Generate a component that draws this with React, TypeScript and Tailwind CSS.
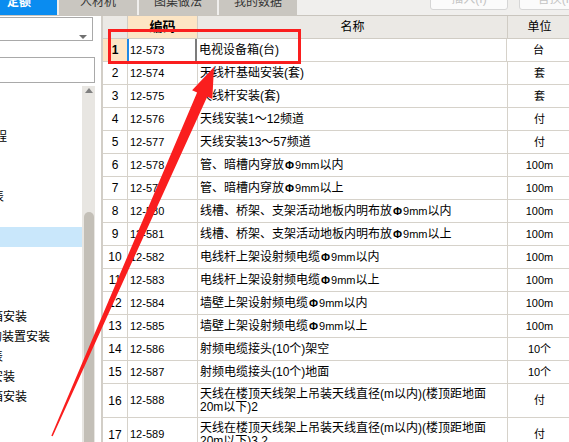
import React from "react";

type Row = { no: number; code: string; name: string[]; unit: string; tall?: boolean };

const rows: Row[] = [
  { no: 1, code: "12-573", name: ["电视设备箱(台)"], unit: "台" },
  { no: 2, code: "12-574", name: ["天线杆基础安装(套)"], unit: "套" },
  { no: 3, code: "12-575", name: ["天线杆安装(套)"], unit: "套" },
  { no: 4, code: "12-576", name: ["天线安装1～12频道"], unit: "付" },
  { no: 5, code: "12-577", name: ["天线安装13～57频道"], unit: "付" },
  { no: 6, code: "12-578", name: ["管、暗槽内穿放Φ9mm以内"], unit: "100m" },
  { no: 7, code: "12-579", name: ["管、暗槽内穿放Φ9mm以上"], unit: "100m" },
  { no: 8, code: "12-580", name: ["线槽、桥架、支架活动地板内明布放Φ9mm以内"], unit: "100m" },
  { no: 9, code: "12-581", name: ["线槽、桥架、支架活动地板内明布放Φ9mm以上"], unit: "100m" },
  { no: 10, code: "12-582", name: ["电线杆上架设射频电缆Φ9mm以内"], unit: "100m" },
  { no: 11, code: "12-583", name: ["电线杆上架设射频电缆Φ9mm以上"], unit: "100m" },
  { no: 12, code: "12-584", name: ["墙壁上架设射频电缆Φ9mm以内"], unit: "100m" },
  { no: 13, code: "12-585", name: ["墙壁上架设射频电缆Φ9mm以上"], unit: "100m" },
  { no: 14, code: "12-586", name: ["射频电缆接头(10个)架空"], unit: "10个" },
  { no: 15, code: "12-587", name: ["射频电缆接头(10个)地面"], unit: "10个" },
  { no: 16, code: "12-588", name: ["天线在楼顶天线架上吊装天线直径(m以内)(楼顶距地面", "20m以下)2"], unit: "付", tall: true },
  { no: 17, code: "12-589", name: ["天线在楼顶天线架上吊装天线直径(m以内)(楼顶距地面", "20m以下)3.2"], unit: "付", tall: true },
];

// tree rows in the left panel, 20px each, most of the text is scrolled off to the left
const tree: { text: string; shift: string }[] = [
  { text: "", shift: "" },
  { text: "", shift: "" },
  { text: "程", shift: "ml-[-5px]" },
  { text: "", shift: "" },
  { text: "", shift: "" },
  { text: "表", shift: "ml-[-8px]" },
  { text: "", shift: "" },
  { text: "", shift: "" },
  { text: "", shift: "" },
  { text: "", shift: "" },
  { text: "", shift: "" },
  { text: "箱安装", shift: "ml-[-9px]" },
  { text: "的装置安装", shift: "ml-[-10px]" },
  { text: "表", shift: "ml-[-9px]" },
  { text: "安装", shift: "ml-[-9px]" },
  { text: "箱安装", shift: "ml-[-9px]" },
  { text: "", shift: "" },
  { text: "", shift: "" },
];

function Name({ text }: { text: string }) {
  const parts = text.split("Φ");
  if (parts.length === 1) return <>{text}</>;
  return (
    <>
      {parts[0]}
      <span className="text-[11px] font-bold px-px">Φ</span>
      <span className="text-[11px]">{parts[1].slice(0, 3)}</span>
      {parts[1].slice(3)}
    </>
  );
}

export default function App() {
  return (
    <div className="relative w-[569px] h-[442px] overflow-hidden bg-[#f0efed] font-['Liberation_Sans','Noto_Sans_CJK_SC',sans-serif] text-[12px] text-black">
      {/* Top tabs */}
      <div className="flex h-[16px] border-b border-[#c9c5be]">
        <div className="w-[57px] h-[15px] overflow-hidden bg-[#0a8cf0] text-white font-bold pl-[7px]">
          <span className="block leading-[12px] mt-[-4px]">定额</span>
        </div>
        {["人材机", "图集做法", "我的数据"].map((t) => (
          <div key={t} className="ml-[2px] w-[78px] h-[15px] overflow-hidden bg-[#c9c6c0] text-[#333] text-center">
            <span className="block leading-[12px] mt-[-4px]">{t}</span>
          </div>
        ))}
        <div className="flex-1" />
        <div className="mt-[-12px] w-[78px] h-[22px] rounded-[3px] border border-[#d6d6d6] bg-[#fbfbfb] text-[#c4c4c4] flex items-center justify-center">
          插入(I)
        </div>
        <div className="mt-[-12px] ml-[11px] w-[78px] mr-[-28px] h-[22px] rounded-[3px] border border-[#d6d6d6] bg-[#fbfbfb] text-[#c4c4c4] flex items-center justify-center">
          替换(R)
        </div>
      </div>

      <div className="flex h-[426px]">
        {/* Left panel */}
        <div className="w-[101px] bg-white flex flex-col">
          <div className="w-[95px] h-[24px] mt-px border-y border-r border-[#a9a9a9] relative ml-[-2px]">
            <span className="absolute right-[5px] top-[17px] w-0 h-0 border-x-[4px] border-x-transparent border-t-[4px] border-t-[#707070]" />
          </div>
          <div className="w-[95px] h-[26px] mt-[16px] border-y border-r border-[#a9a9a9]" />
          <div className="flex mt-[3px] flex-1 overflow-hidden">
            <div className="w-[82px] overflow-hidden pt-px">
              {tree.map((r, i) => (
                <div
                  key={i}
                  className={`h-[20px] flex items-center whitespace-nowrap ${i === 7 ? "bg-[#c9e7fb]" : ""}`}
                >
                  <span className={r.shift}>{r.text}</span>
                </div>
              ))}
            </div>
            <div className="w-[13px] bg-[#e8e6e2] flex flex-col items-center">
              <span className="mt-[2px] w-0 h-0 border-x-[4px] border-x-transparent border-b-[5px] border-b-[#808080]" />
              <div className="mt-[119px] w-[10px] flex-1 rounded-t-[5px] bg-[#c3bfb7]" />
            </div>
          </div>
        </div>
        <div className="w-[2px] bg-[#d2cec7]" />

        {/* Grid */}
        <div className="flex-1 overflow-hidden bg-white">
          <div className="w-[600px]">
            <div className="flex h-[23px] bg-[#ebe9e5] border-b border-[#d0ccc4]">
              <div className="w-[25px] border-r border-[#d0ccc4]" />
              <div className="w-[70px] border-r border-[#d0ccc4] bg-[#fde5c4] font-bold text-[13px] flex items-center justify-center">
                编码
              </div>
              <div className="w-[310px] border-r border-[#d0ccc4] flex items-center justify-center">名称</div>
              <div className="w-[64px] border-r border-[#d0ccc4] flex items-center justify-center">单位</div>
            </div>
            {rows.map((r) => (
              <div key={r.no} className={`flex border-b border-[#d6d2ca] ${r.tall ? "h-[34px]" : "h-[23px]"}`}>
                <div
                  className={`w-[25px] border-r border-[#d6d2ca] flex items-center justify-center ${
                    r.no === 1 ? "bg-[#fde5c4] font-bold" : ""
                  }`}
                >
                  {r.no}
                </div>
                <div
                  className={`w-[70px] flex items-center text-[11px] ${
                    r.no === 1
                      ? "border-l-2 border-l-[#1e88e5] border-r-2 border-r-[#7c7c7c] pl-px ml-[-1px]"
                      : "border-r border-[#d6d2ca] pl-[2px]"
                  }`}
                >
                  {r.code}
                </div>
                <div className="w-[310px] border-r border-[#d6d2ca] flex flex-col justify-center pl-[2px] leading-[13px] whitespace-nowrap">
                  {r.name.map((l, i) => (
                    <span key={i}>
                      <Name text={l} />
                    </span>
                  ))}
                </div>
                <div className="w-[64px] border-r border-[#d6d2ca] flex items-center justify-center text-[11px]">
                  {r.unit}
                </div>
              </div>
            ))}
          </div>
        </div>
      </div>

      {/* red annotation */}
      <div className="absolute left-[108px] top-[29px] w-[193px] h-[35px] border-[3.5px] border-[#fa1e1e]" />
      <svg className="absolute inset-0 pointer-events-none" width="569" height="442" viewBox="0 0 569 442">
        <polygon
          points="214,67 212.3,98.9 207.2,96.8 52.7,436.3 51.3,435.7 197.1,92.4 192.1,90.3"
          fill="#fa1e1e"
        />
      </svg>
    </div>
  );
}
